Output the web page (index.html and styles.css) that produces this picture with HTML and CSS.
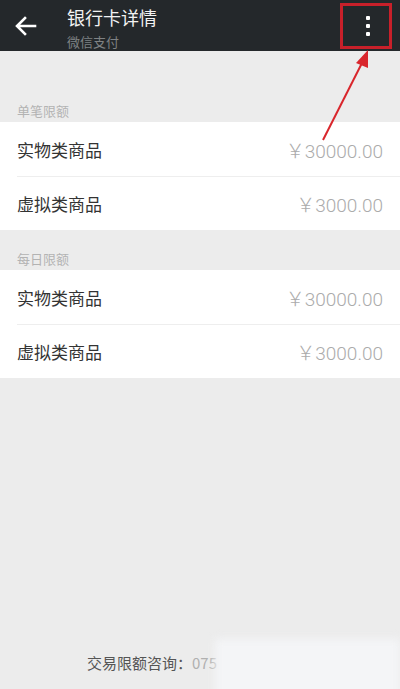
FILE: index.html
```html
<!DOCTYPE html>
<html>
<head>
<meta charset="utf-8">
<link rel="stylesheet" href="styles.css">
</head>
<body>
<div class="screen">
  <header class="bar">
    <div class="back">
      <svg width="22" height="20" viewBox="0 0 22 20"><path d="M20 10H3M10 2L2 10l8 8" fill="none" stroke="#fff" stroke-width="2.6" stroke-linecap="square"/></svg>
    </div>
    <div class="titles">
      <div class="title">银行卡详情</div>
      <div class="subtitle">微信支付</div>
    </div>
    <div class="more">
      <span class="dot"></span><span class="dot"></span><span class="dot"></span>
    </div>
  </header>
  <svg class="pointer" width="80" height="100" viewBox="0 0 80 100">
    <line x1="5" y1="93" x2="45" y2="14" stroke="#d9262c" stroke-width="2"/>
    <polygon points="50,3 50,21 38,16" fill="#d9262c"/>
  </svg>
  <main class="content">
    <div class="section-label">单笔限额</div>
    <div class="group">
      <div class="row"><span class="name">实物类商品</span><span class="amount">￥30000.00</span></div>
      <div class="row"><span class="name">虚拟类商品</span><span class="amount">￥3000.00</span></div>
    </div>
    <div class="section-label">每日限额</div>
    <div class="group">
      <div class="row"><span class="name">实物类商品</span><span class="amount">￥30000.00</span></div>
      <div class="row"><span class="name">虚拟类商品</span><span class="amount">￥3000.00</span></div>
    </div>
  </main>
  <footer class="foot">
    <span class="foot-label">交易限额咨询：</span><span class="foot-num">075</span>
    <span class="blur"></span>
  </footer>
</div>
</body>
</html>
```
FILE: styles.css
```css
* { box-sizing: border-box; }
html, body { margin: 0; padding: 0; }
body {
  width: 400px;
  height: 689px;
  background: #ececec;
  font-family: "Noto Sans CJK SC", "Liberation Sans", sans-serif;
  overflow: hidden;
}
.screen {
  position: relative;
  height: 689px;
  display: flex;
  flex-direction: column;
}
.bar {
  height: 51px;
  background: #24282b;
  display: flex;
  align-items: center;
  flex-shrink: 0;
}
.back {
  width: 67px;
  padding-left: 15px;
  display: flex;
  align-items: center;
}
.titles {
  flex: 1;
  display: flex;
  flex-direction: column;
  gap: 6px;
  padding-top: 4px;
}
.title {
  color: #f2f2f2;
  font-size: 18px;
  line-height: 22px;
}
.subtitle {
  color: #7f8284;
  font-size: 13px;
  line-height: 16px;
}
.more {
  width: 52px;
  height: 46px;
  margin-right: 8px;
  border: 3px solid #c8202a;
  display: flex;
  flex-direction: column;
  align-items: center;
  justify-content: center;
  gap: 4px;
  padding-left: 4px;
}
.dot {
  width: 4px;
  height: 4px;
  background: #fff;
  border-radius: 1px;
}
.pointer {
  position: absolute;
  left: 318px;
  top: 47px;
  z-index: 5;
}
.content {
  flex: 1;
  padding-top: 48px;
}
.section-label {
  color: #b3b3b3;
  font-size: 13px;
  line-height: 24px;
  padding-left: 17px;
  margin-bottom: -1px;
}
.group {
  background: #fff;
  margin-bottom: 17px;
}
.row {
  height: 54px;
  margin-left: 17px;
  padding-right: 17px;
  display: flex;
  align-items: center;
  justify-content: space-between;
}
.row + .row { border-top: 1px solid #eeeeee; }
.name {
  color: #333;
  font-size: 17px;
}
.amount {
  color: #ababab;
  font-size: 19px;
  font-family: "Roboto", "Noto Sans CJK SC", sans-serif;
  font-weight: 300;
}
.foot {
  position: relative;
  height: 36px;
  padding-left: 87px;
  font-size: 15px;
  line-height: 20px;
  color: #555;
}
.foot-num { color: #b0b0b0; }
.blur {
  position: absolute;
  left: 215px;
  top: -14px;
  width: 185px;
  height: 60px;
  background: #f4f5f7;
  filter: blur(4px);
}
```
